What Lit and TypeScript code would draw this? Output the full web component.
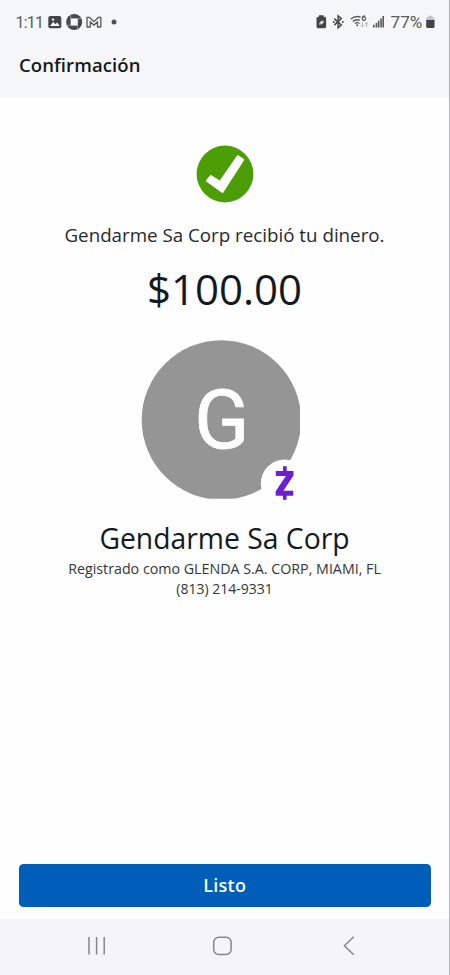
import { LitElement, html, css } from "lit";
import { customElement } from "lit/decorators.js";

@customElement("status-bar")
class StatusBar extends LitElement {
  static styles = css`
    :host { display: flex; height: 44px; padding: 0 12px 0 15px; justify-content: space-between; color: #5b5d60; font-family: Roboto, sans-serif; }
    .side { display: flex; align-items: center; flex: none; }
    .time { box-sizing: border-box; padding-left: 0.5px; font-size: 16px; letter-spacing: -0.75px; width: 32px; }
    .level { box-sizing: border-box; padding-left: 0.5px; font-size: 17.2px; width: 35px; }
    svg { display: block; flex: none; }
  `;
  render() {
    return html`
      <div class="side">
        <span class="time">1:11</span>
        <svg width="72" height="44" viewBox="47 0 72 44">
          <rect x="48.3" y="16" width="13" height="12.2" rx="2" fill="#424447" />
          <path d="M50 26l3.2-4.2 2.2 2.5 1.8-1.8 2.6 3.5z" fill="#f5f6f8" />
          <circle cx="53" cy="19.6" r="1.2" fill="#f5f6f8" />
          <circle cx="74.2" cy="22" r="8" fill="#47494c" />
          <rect x="70.6" y="18.4" width="7.2" height="7.2" fill="#f5f6f8" />
          <path d="M70.8 18.6V14M77.6 18.6H82M77.6 25.4V30M70.8 25.4H66" stroke="#b0b2b5" stroke-width=".7" />
          <path d="M87 27V17.3h2.3l4.6 4.3 4.6-4.3h2.3V27h-3.3v-5.2l-3.6 3.4-3.6-3.4V27z" fill="none" stroke="#55575a" stroke-width="1.3" stroke-linejoin="round" />
          <circle cx="114" cy="22" r="2.5" fill="#505255" />
        </svg>
      </div>
      <div class="side">
        <svg width="75" height="44" viewBox="315 0 75 44">
          <path d="M319 15.2h4.5v1.6h1q1.6 0 1.6 1.6v8.1q0 1.7-1.6 1.7h-6.4q-1.6 0-1.6-1.7v-8.1q0-1.6 1.6-1.6h.9z" fill="#424447" />
          <path d="M319.2 24.7q-.6-4 4.8-4.1-.1 4.6-4.1 4l-1.2 1.5M322 22.2l-2 2" stroke="#424447" stroke-width=".5" fill="#f1f2f4" />
          <path d="M334.3 18.6l7 6.5-3.2 2.8V15.8l3.2 2.8-7 6.5" fill="none" stroke="#48494c" stroke-width="1.5" />
          <circle cx="333.8" cy="21.9" r="1" fill="#48494c" />
          <circle cx="342.8" cy="21.9" r="1" fill="#48494c" />
          <g fill="none" stroke="#55575a" stroke-width="1.35">
            <path d="M350.8 19q4.6-3.8 9.8-1.9M352.8 21.4q3.2-2.7 7-1.1M354.8 23.5q2.3-1.7 4.6 0" />
            <path d="M365.2 15.9q-3 .2-3 2.8a1.7 1.7 0 1 0 1.2-1.6" stroke-width="1.15" />
          </g>
          <circle cx="357.2" cy="25.2" r="1" fill="#55575a" />
          <path d="M362.4 22.5v4.3M360.8 25.3l1.6 1.7 1.6-1.7M366.5 27v-4.3M365 24.3l1.5-1.7 1.6 1.7" fill="none" stroke="#b3b5b8" stroke-width="1" />
          <path d="M373.8 27.5v-2.8M376.4 27.5v-4.6M378.6 27.5v-6.7M381 27.5v-9M383.2 27.5V16.1" stroke="#55575a" stroke-width="1.6" />
        </svg>
        <span class="level">77%</span>
        <svg width="12" height="44" viewBox="425 0 12 44">
          <path d="M428.3 15.8h4v1.5h.9q1.3 0 1.3 1.3V21h-8.3v-2.4q0-1.3 1.3-1.3h.8z" fill="#c1c2c5" />
          <path d="M426.2 20h8.3v6.6q0 1.5-1.4 1.5h-5.5q-1.4 0-1.4-1.5z" fill="#424447" />
        </svg>
      </div>
    `;
  }
}

@customElement("app-root")
class AppRoot extends LitElement {
  static styles = css`
    :host { display: flex; flex-direction: column; box-sizing: border-box; height: 975px; width: 450px; border-right: 1px solid #b4b5b7; background: #fefefe; font-family: "Open Sans", "Noto Sans", sans-serif; color: #14191f; overflow: hidden; }
    header { height: 97.5px; background: #f5f6f8; flex: none; }
    h1 { margin: 0; padding-left: 19px; font-size: 18.5px; font-weight: 600; line-height: 42px; letter-spacing: 0.1px; }
    main { flex: 1; display: flex; flex-direction: column; align-items: center; white-space: nowrap; }
    svg { display: block; flex: none; }
    .check { margin-top: 47.5px; }
    .msg { margin-top: 18px; font-size: 18.75px; line-height: 28px; color: #26292d; }
    .amount { margin-top: 12px; font-size: 42px; line-height: 56px; }
    .avatar { margin-top: 23px; }
    .initial { font-family: Roboto, sans-serif; font-size: 81px; fill: #fff; stroke: #fff; stroke-width: 0.8px; }
    .name { margin-top: 16px; font-size: 28.3px; line-height: 40px; }
    .detail { font-size: 14.25px; line-height: 20px; color: #33363a; }
    .name + .detail { margin-top: 1px; }
    .phone { font-size: 14px; }
    button { margin: auto 18px 12.5px 18.5px; align-self: stretch; height: 42.5px; flex: none; border: 0; border-radius: 4.5px; background: #005eb8; color: #f5faff; font: 600 18px/42px "Open Sans", sans-serif; letter-spacing: 0.3px; padding: 0; }
    nav { height: 56px; flex: none; background: #f5f5f7; }
  `;
  render() {
    return html`
      <header>
        <status-bar></status-bar>
        <h1>Confirmación</h1>
      </header>
      <main>
        <svg class="check" width="58" height="58" viewBox="0 0 58 58">
          <circle cx="29" cy="29" r="28.4" fill="#4b9e05" />
          <path d="M10 35.3l4-4.9q.5-.7 1.3-.2l8.5 5.3 17.3-24.9q.5-.7 1.2-.3l5.6 3.7q.7.5.2 1.2L27.3 47.5q-.6.9-1.4.3l-15.7-11.4q-.6-.5-.2-1.1z" fill="#fff" />
        </svg>
        <div class="msg">Gendarme Sa Corp recibió tu dinero.</div>
        <div class="amount">$100.00</div>
        <svg class="avatar" width="167" height="162" viewBox="141 340 167 162">
          <defs>
            <clipPath id="photo"><rect x="141" y="340" width="159" height="158.8" /></clipPath>
          </defs>
          <circle cx="221.4" cy="420" r="79.7" fill="#959595" clip-path="url(#photo)" />
          <text class="initial" x="194.2" y="448">G</text>
          <circle cx="284.8" cy="483.4" r="24" fill="#fefefe" />
          <path d="M283 466.2h3.7v4.7h6.8v4.5l-10.1 15.3h9.9v5.1h-6.7v4h-3.7v-4h-7.2v-4.5l10.2-15.3h-10.1v-5.1h7.2z" fill="#6b1fce" />
        </svg>
        <div class="name">Gendarme Sa Corp</div>
        <div class="detail">Registrado como GLENDA S.A. CORP, MIAMI, FL</div>
        <div class="detail phone">(813) 214-9331</div>
        <button>Listo</button>
      </main>
      <nav>
        <svg width="449" height="56" viewBox="0 919 449 56" fill="none" stroke="#858689" stroke-width="1.5">
          <path d="M89 937v17.5M96.6 937v17.5M104.2 937v17.5" />
          <rect x="213.7" y="937.2" width="17.4" height="17.2" rx="5" />
          <path d="M353.7 936.8l-9.3 8.9 9.3 9" />
        </svg>
      </nav>
    `;
  }
}
